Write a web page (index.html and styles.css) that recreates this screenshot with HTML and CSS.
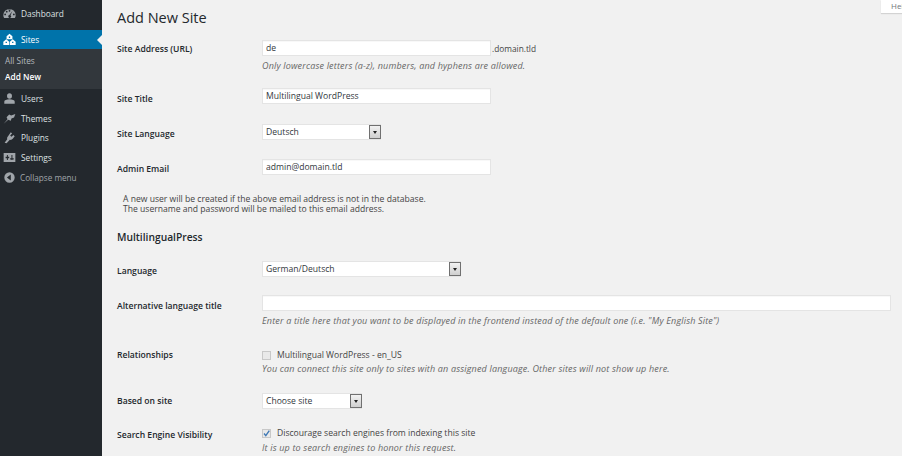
FILE: index.html
```html
<!DOCTYPE html>
<html lang="en">
<head>
  <meta charset="UTF-8">
  <title>Add New Site</title>
  <link rel="stylesheet" href="styles.css">
</head>
<body>
  <!-- Admin menu -->
  <nav class="sidebar">
    <a class="menu-item first">
      <svg class="icon" viewBox="0 0 20 20"><path d="M10 3a9.500 9.500 0 0 0-9.500 9.500c0 1.700.5 3.300 1.300 4.500h16.400c.8-1.200 1.300-2.800 1.300-4.500a9.500 9.500 0 0 0-9.500-9.500zM5.700 5.800a1.400 1.400 0 1 1 0 2.800 1.400 1.400 0 0 1 0-2.800zM10 4.500a1.400 1.400 0 1 1 0 2.800 1.400 1.400 0 0 1 0-2.800zM3.300 10a1.400 1.400 0 1 1 0 2.800 1.400 1.400 0 0 1 0-2.800zM16.700 10a1.400 1.400 0 1 1 0 2.800 1.400 1.400 0 0 1 0-2.800zM14.500 6l-3 6.500a2.200 2.200 0 1 1-1.700-.3z" fill-rule="evenodd"/></svg>
      Dashboard
    </a>
    <a class="menu-item active">
      <svg class="icon" viewBox="0 0 20 20"><path d="M10 1l4.500 4v4.500h-9v-4.500zM9 5.500v2h2v-2zM5 9.500l4.500 4v5h-9v-5zM4 13.500v2h2v-2zM15 9.500l4.500 4v5h-9v-5zM14 13.500v2h2v-2z" fill-rule="evenodd"/></svg>
      Sites
    </a>
    <div class="submenu">
      <a>All Sites</a>
      <a class="current">Add New</a>
    </div>
    <a class="menu-item">
      <svg class="icon" viewBox="0 0 20 20"><path d="M10 2a3.800 4.200 0 1 1 0 8.400 3.800 4.200 0 0 1 0-8.400zM10 11c4.500 0 8 1.500 8 3.500v3.500h-16v-3.500c0-2 3.500-3.500 8-3.500z"/></svg>
      Users
    </a>
    <a class="menu-item">
      <svg class="icon" viewBox="0 0 20 20"><path d="M1 18l6-7-1.500-3 4-4 3 1.500 6.500-2.500-2 5.500-4 1.500-1 3.500-4-1.500z"/></svg>
      Themes
    </a>
    <a class="menu-item">
      <svg class="icon" viewBox="0 0 20 20"><path d="M12 2l2 2-3 3 2 2 3-3 2 2-3 4c-1 1.500-3 2-4.500 1.500l-5 5.500-3-1 4-5.500c-.5-1.500 0-3 1-4z"/></svg>
      Plugins
    </a>
    <a class="menu-item">
      <svg class="icon" viewBox="0 0 20 20"><path d="M1 3h18v14h-18zM6 6v3h-2v2h2v3h1.500v-3h2v-2h-2v-3zM13 6v5h-2v2h2v1h1.500v-1h2v-2h-2v-5z" fill-rule="evenodd"/></svg>
      Settings
    </a>
    <a class="menu-item collapse">
      <svg class="icon" viewBox="0 0 20 20"><path d="M10 2a8 8 0 1 1 0 16 8 8 0 0 1 0-16zM12 5.500l-6 4.500 6 4.500z" fill-rule="evenodd"/></svg>
      Collapse menu
    </a>
  </nav>

  <main class="content">
    <div class="help-tab">Help</div>
    <h1>Add New Site</h1>

    <div class="row row-address">
      <label>Site Address (URL)</label>
      <div>
        <div class="address">
          <input class="text-input" type="text" value="de"><span>.domain.tld</span>
        </div>
        <p class="description">Only lowercase letters (a-z), numbers, and hyphens are allowed.</p>
      </div>
    </div>

    <div class="row row-title">
      <label>Site Title</label>
      <input class="text-input" type="text" value="Multilingual WordPress">
    </div>

    <div class="row row-lang">
      <label>Site Language</label>
      <div class="select select-small"><span>Deutsch</span><i class="arrow"></i></div>
    </div>

    <div class="row row-email">
      <label>Admin Email</label>
      <input class="text-input" type="text" value="admin@domain.tld">
    </div>

    <p class="note">A new user will be created if the above email address is not in the database.<br>The username and password will be mailed to this email address.</p>

    <h2>MultilingualPress</h2>

    <div class="row row-language">
      <label>Language</label>
      <div class="select select-large"><span>German/Deutsch</span><i class="arrow"></i></div>
    </div>

    <div class="row row-alt">
      <label>Alternative language title</label>
      <div>
        <input class="text-input wide" type="text">
        <p class="description">Enter a title here that you want to be displayed in the frontend instead of the default one (i.e. "My English Site")</p>
      </div>
    </div>

    <div class="row row-rel">
      <label>Relationships</label>
      <div>
        <div class="check"><i class="checkbox"></i>Multilingual WordPress - en_US</div>
        <p class="description">You can connect this site only to sites with an assigned language. Other sites will not show up here.</p>
      </div>
    </div>

    <div class="row row-based">
      <label>Based on site</label>
      <div class="select select-choose"><span>Choose site</span><i class="arrow"></i></div>
    </div>

    <div class="row row-search">
      <label>Search Engine Visibility</label>
      <div>
        <div class="check">
          <i class="checkbox"><svg viewBox="0 0 10 10"><path d="M1.500 5l2.500 3 5-7" fill="none" stroke="#3f78b5" stroke-width="2"/></svg></i>Discourage search engines from indexing this site
        </div>
        <p class="description">It is up to search engines to honor this request.</p>
      </div>
    </div>
  </main>
</body>
</html>
```

FILE: styles.css
```css
* {
  box-sizing: border-box;
}

body {
  margin: 0;
  display: flex;
  height: 456px;
  overflow: hidden;
  background: #f1f1f1;
  font-family: "Open Sans", sans-serif;
  font-size: 8.600px;
  color: #444;
}

/* Sidebar */
.sidebar {
  width: 102px;
  flex-shrink: 0;
  background: #23282d;
  color: #eee;
}

.menu-item {
  display: flex;
  align-items: center;
  height: 19.600px;
  padding-left: 3px;
  gap: 5px;
  font-size: 8.300px;
  color: #dfe1e3;
}

.menu-item.first {
  height: 19px;
  margin-top: 4px;
  margin-bottom: 7px;
}

.icon {
  width: 13px;
  height: 13px;
  fill: #a0a5aa;
  flex-shrink: 0;
}

.menu-item.active {
  position: relative;
  height: 19px;
  background: #0073aa;
  color: #fff;
}

.menu-item.active .icon {
  fill: #fff;
}

.menu-item.active::after {
  content: "";
  position: absolute;
  right: 0;
  top: 5px;
  border: 5px solid transparent;
  border-right-color: #f1f1f1;
  border-left-width: 0;
}

.submenu {
  background: #32373c;
  padding: 4px 0 4px;
}

.submenu a {
  display: block;
  padding-left: 5px;
  height: 16px;
  line-height: 16px;
  font-size: 8.300px;
  color: #b4b9be;
}

.submenu .current {
  color: #fff;
  font-weight: 600;
}

.menu-item.collapse {
  color: #a0a5aa;
  font-size: 8.200px;
  gap: 4px;
}

/* Main content */
.content {
  flex: 1;
  position: relative;
  padding-left: 15px;
}

.help-tab {
  position: absolute;
  top: 0;
  right: 0;
  width: 21px;
  height: 13px;
  padding-left: 10px;
  overflow: hidden;
  background: #fff;
  box-shadow: 0 1px 1px rgba(0,0,0,0.12);
  font-size: 8px;
  line-height: 12px;
  color: #72777c;
}

h1 {
  margin: 8px 0 0;
  font-size: 14.500px;
  line-height: 19px;
  font-weight: 400;
  color: #23282d;
}

h2 {
  margin: 16px 0 0;
  font-size: 10.250px;
  line-height: 14px;
  font-weight: 600;
  color: #23282d;
}

.row {
  display: grid;
  grid-template-columns: 145px 1fr;
  align-items: start;
}

.row label {
  font-weight: 600;
  color: #23282d;
  line-height: 8px;
  margin-top: 5.500px;
}

.row-address { margin-top: 13px; }
.row-title { margin-top: 16px; }
.row-lang { margin-top: 20px; }
.row-email { margin-top: 19px; }
.row-language { margin-top: 17px; }
.row-alt { margin-top: 18px; }
.row-rel { margin-top: 22px; }
.row-based { margin-top: 18px; }
.row-search { margin-top: 18px; }

.row-address label { margin-top: 4.500px; }
.row-title label { margin-top: 6.500px; }
.row-alt label { margin-top: 6.500px; }
.row-rel label { margin-top: 1.500px; }
.row-based label { margin-top: 3.500px; }
.row-search label { margin-top: 3.500px; }

.text-input {
  display: block;
  width: 229px;
  height: 16px;
  padding: 0 3px;
  border: 1px solid #e4e4e4;
  background: #fff;
  font-family: inherit;
  font-size: 8.600px;
  color: #32373c;
  outline: none;
  box-shadow: inset 0 1px 1px rgba(0,0,0,0.03);
}

.text-input.wide {
  width: 629px;
}

.address {
  display: flex;
  align-items: center;
}

.address span {
  font-size: 8.300px;
  padding-left: 1px;
}

.description {
  margin: 0;
  padding-top: 3px;
  font-size: 9px;
  letter-spacing: 0.170px;
  font-style: italic;
  line-height: 13px;
  color: #666;
}

.row-rel .description {
  padding-top: 0;
}

.row-search .description {
  padding-top: 1px;
}

.note {
  margin: 19px 0 0;
  padding-left: 6px;
  line-height: 10px;
  color: #444;
}

/* Selects */
.select {
  position: relative;
  height: 16px;
  padding-left: 3px;
  line-height: 15px;
  border: 1px solid #e4e4e4;
  background: #fff;
  color: #32373c;
}

.select-small { width: 119px; }
.select-large { width: 199px; }
.select-choose { width: 100px; }

.arrow {
  position: absolute;
  top: 0;
  right: -1px;
  width: 12px;
  height: 14px;
  border: 1px solid #707070;
  background: linear-gradient(#f2f2f2, #cfcfcf);
}

.arrow::after {
  content: "";
  position: absolute;
  left: 3px;
  top: 5px;
  border: 2px solid transparent;
  border-top: 3px solid #222;
  border-bottom-width: 0;
}

/* Checkboxes */
.check {
  display: flex;
  align-items: center;
  height: 13px;
  line-height: 13px;
  color: #444;
}

.checkbox {
  display: block;
  width: 9px;
  height: 9px;
  margin-right: 6px;
  border: 1px solid #c8c8c8;
  background: #e9e9e9;
}

.checkbox svg {
  display: block;
  width: 100%;
  height: 100%;
}
```
